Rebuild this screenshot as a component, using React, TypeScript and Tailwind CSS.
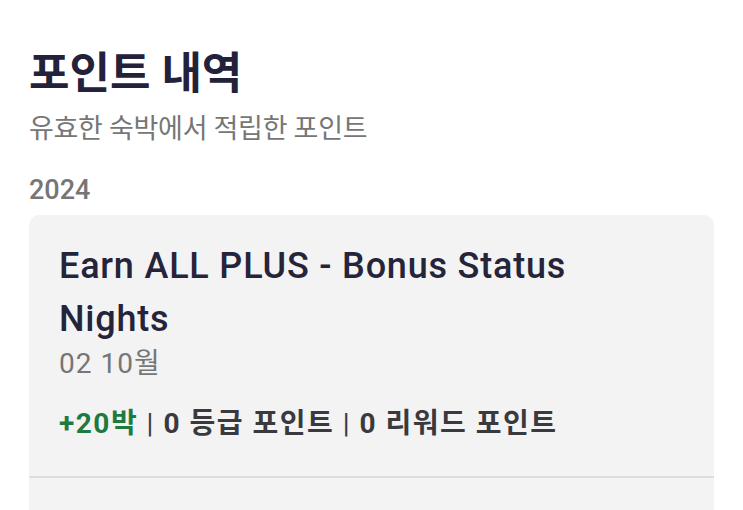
import React from "react";

export default function App() {
  const font = { fontFamily: 'Roboto, "Noto Sans CJK KR", "Noto Sans", sans-serif' };
  return (
    <div className="w-[743px] h-[510px] overflow-hidden bg-white px-[29px]" style={font}>
      <h1 className="pt-[44px] text-[44px] leading-[60px] font-bold text-[#23223a]">
        포인트 내역
      </h1>
      <p className="mt-[7px] text-[27px] leading-[36px] tracking-[-0.3px] text-[#767676]">
        유효한 숙박에서 적립한 포인트
      </p>
      <div className="mt-[26px] text-[27px] leading-[34px] font-medium text-[#767676]">2024</div>
      <div className="mt-[8px] rounded-[10px] bg-[#f3f3f3]">
        <div className="px-[30px] pt-[25px] pb-[34px]">
          <div className="text-[36px] leading-[53px] font-medium tracking-[0.8px] text-[#25243a]">
            Earn ALL PLUS - Bonus Status
            <br />
            Nights
          </div>
          <div className="text-[28px] leading-[36px] tracking-[1px] text-[#767676]">02 10월</div>
          <div className="mt-[24px] text-[28px] leading-[36px] font-bold tracking-[1.5px] text-[#3a3a3e]">
            <span className="text-[#1f7a40]">+20박</span>
            <span className="font-normal"> | </span>0 등급 포인트
            <span className="font-normal"> | </span>0 리워드 포인트
          </div>
        </div>
        <div className="h-[2px] bg-[#dedede]" />
        <div className="h-[60px]" />
      </div>
    </div>
  );
}
